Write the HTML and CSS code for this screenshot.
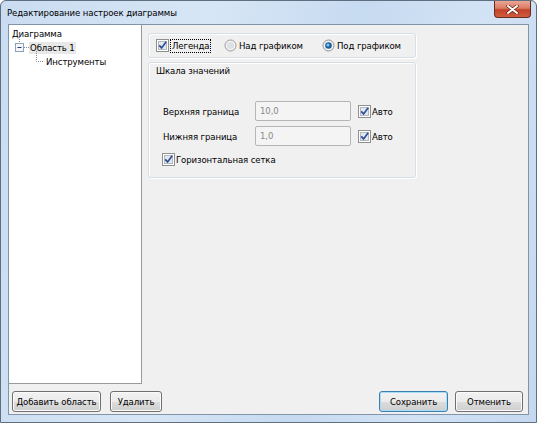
FILE: index.html
```html
<!DOCTYPE html>
<html>
<head>
<meta charset="utf-8">
<link rel="stylesheet" href="styles.css">
</head>
<body>
<div class="window">
  <div class="titlebar">
    <span class="title">Редактирование настроек диаграммы</span>
    <div class="close"><svg width="13" height="9" viewBox="0 0 13 9"><path d="M2 1 L11 8 M11 1 L2 8" stroke="#6a2416" stroke-width="3.4" stroke-linecap="round"/><path d="M2 1 L11 8 M11 1 L2 8" stroke="#ffffff" stroke-width="2" stroke-linecap="round"/></svg></div>
  </div>
  <div class="client">
    <div class="main">
      <div class="tree">
        <svg class="tree-lines" width="60" height="60" viewBox="0 0 60 60">
          <path d="M10.5 10 V18 M15 22.5 H20 M27.5 26 V36.5 H35" stroke="#8a8a8a" stroke-dasharray="1 1" fill="none"/>
          <rect x="6.5" y="18.5" width="8" height="8" fill="#f4f6f8" stroke="#8ea3bb"/>
          <path d="M8.5 22.5 H12.5" stroke="#1e3a8a"/>
        </svg>
        <div class="node root">Диаграмма</div>
        <div class="node lvl1"><span class="sel">Область 1</span></div>
        <div class="node lvl2">Инструменты</div>
      </div>
      <div class="panel">
        <div class="group legend-group">
          <label class="check legend">
            <svg class="cb" viewBox="0 0 13 13"><rect x="0.5" y="0.5" width="12" height="12" fill="#ffffff" stroke="#8e8f8f"/><rect x="2.5" y="2.5" width="8" height="8" fill="#e4e7eb" stroke="#b4b9bf"/><path d="M3.2 6.3 L5.6 8.9 L10.2 2.8" stroke="#2e4f9c" stroke-width="1.7" fill="none"/></svg>
            <span class="focus">Легенда</span>
          </label>
          <label class="radio r1">
            <svg class="rb" viewBox="0 0 13 13"><circle cx="6.5" cy="6.5" r="5.5" fill="#f3f3f3" stroke="#999"/><circle cx="6.5" cy="6.5" r="3.6" fill="#dcdfe3"/></svg>
            <span>Над графиком</span>
          </label>
          <label class="radio r2">
            <svg class="rb" viewBox="0 0 13 13"><circle cx="6.5" cy="6.5" r="5.5" fill="#f3f3f3" stroke="#8e8f8f"/><circle cx="6.5" cy="6.5" r="3.3" fill="#1c5c9c"/><circle cx="6" cy="6" r="1.6" fill="#7cc6f2"/></svg>
            <span>Под графиком</span>
          </label>
        </div>
        <div class="group scale-group">
          <div class="group-title">Шкала значений</div>
          <div class="field">
            <span class="field-label">Верхняя граница</span>
            <span class="input">10,0</span>
            <label class="check auto">
              <svg class="cb" viewBox="0 0 13 13"><rect x="0.5" y="0.5" width="12" height="12" fill="#ffffff" stroke="#8e8f8f"/><rect x="2.5" y="2.5" width="8" height="8" fill="#e4e7eb" stroke="#b4b9bf"/><path d="M3.2 6.3 L5.6 8.9 L10.2 2.8" stroke="#2e4f9c" stroke-width="1.7" fill="none"/></svg>
              <span>Авто</span>
            </label>
          </div>
          <div class="field">
            <span class="field-label">Нижняя граница</span>
            <span class="input">1,0</span>
            <label class="check auto">
              <svg class="cb" viewBox="0 0 13 13"><rect x="0.5" y="0.5" width="12" height="12" fill="#ffffff" stroke="#8e8f8f"/><rect x="2.5" y="2.5" width="8" height="8" fill="#e4e7eb" stroke="#b4b9bf"/><path d="M3.2 6.3 L5.6 8.9 L10.2 2.8" stroke="#2e4f9c" stroke-width="1.7" fill="none"/></svg>
              <span>Авто</span>
            </label>
          </div>
          <label class="check grid">
            <svg class="cb" viewBox="0 0 13 13"><rect x="0.5" y="0.5" width="12" height="12" fill="#ffffff" stroke="#8e8f8f"/><rect x="2.5" y="2.5" width="8" height="8" fill="#e4e7eb" stroke="#b4b9bf"/><path d="M3.2 6.3 L5.6 8.9 L10.2 2.8" stroke="#2e4f9c" stroke-width="1.7" fill="none"/></svg>
            <span>Горизонтальная сетка</span>
          </label>
        </div>
      </div>
    </div>
    <div class="bottom">
      <button class="btn add">Добавить область</button>
      <button class="btn del">Удалить</button>
      <span class="spacer"></span>
      <button class="btn save">Сохранить</button>
      <button class="btn cancel">Отменить</button>
    </div>
  </div>
</div>
</body>
</html>
```
FILE: styles.css
```css
* { box-sizing: border-box; }
html, body { margin: 0; padding: 0; background: #ffffff; }
body {
  font-family: "DejaVu Sans Condensed", "DejaVu Sans", sans-serif;
  font-size: 9.5px;
  letter-spacing: -0.1px;
  color: #000;
}
.window {
  width: 537px;
  height: 423px;
  border: 1px solid #5f6f80;
  border-radius: 6px 6px 0 0;
  background: linear-gradient(100deg, #c9dcf1 0%, #d7e6f6 35%, #c6daf0 60%, #d3e3f5 80%, #c4d8ef 100%);
  display: flex;
  flex-direction: column;
  overflow: hidden;
}
.titlebar {
  height: 23px;
  display: flex;
  align-items: flex-start;
  padding-left: 6px;
}
.title {
  margin-top: 6px;
  color: #000;
}
.close {
  margin-left: auto;
  margin-right: 5px;
  width: 37px;
  height: 17px;
  border: 1px solid #6b2a1e;
  border-top: none;
  border-radius: 0 0 4px 4px;
  background: linear-gradient(#e9a795 0%, #dc7c63 45%, #c3412a 55%, #cf5d3e 100%);
  display: flex;
  align-items: center;
  justify-content: center;
}
.client {
  flex: 1;
  margin: 0 7px 7px 7px;
  border: 1px solid #8294a8;
  background: #f0f0f0;
  display: flex;
  flex-direction: column;
}
.main {
  flex: 1;
  display: flex;
}
.tree {
  position: relative;
  width: 133px;
  background: #fff;
  border-right: 1px solid #9a9a9a;
  border-bottom: 1px solid #9a9a9a;
  padding-top: 2px;
}
.tree-lines {
  position: absolute;
  left: 0;
  top: 0;
  pointer-events: none;
}
.node {
  height: 14px;
  line-height: 14px;
  white-space: nowrap;
}
.root { padding-left: 3px; }
.lvl1 { padding-left: 20px; }
.lvl2 { padding-left: 37px; }
.sel {
  display: inline-block;
  background: #e8e8e8;
  padding: 0 1px;
  line-height: 12px;
  height: 12px;
}
.panel {
  flex: 1;
  padding: 8px 0 0 6px;
  display: flex;
  flex-direction: column;
  gap: 4px;
}
.group {
  width: 268px;
  border: 1px solid #d5dfe5;
  border-radius: 3px;
  box-shadow: inset 1px 1px 0 #ffffff, 1px 1px 0 #ffffff;
}
.legend-group {
  height: 25px;
  display: flex;
  align-items: center;
  padding-left: 7px;
}
.check, .radio {
  display: flex;
  align-items: center;
  white-space: nowrap;
}
.cb, .rb { width: 13px; height: 13px; flex: none; }
.check .cb { margin-right: 1px; }
.radio .rb { margin-right: 2px; }
.legend { width: 68px; }
.r1 { width: 98px; }
.focus {
  border: 1px dotted #000;
  padding: 0 1px;
  line-height: 12px;
}
.scale-group {
  height: 116px;
  padding: 1px 0 0 7px;
}
.group-title {
  height: 14px;
  line-height: 14px;
}
.field {
  display: flex;
  align-items: center;
  height: 20px;
  margin-top: 23px;
  padding-left: 7px;
}
.field + .field { margin-top: 5px; }
.field-label { width: 92px; }
.input {
  width: 96px;
  height: 20px;
  border: 1px solid #b5b5b5;
  border-radius: 2px;
  background: #f4f4f4;
  color: #8a8a8a;
  padding-left: 4px;
  line-height: 18px;
}
.auto { margin-left: 7px; }
.grid {
  margin-top: 6px;
  padding-left: 6px;
  height: 14px;
}
.bottom {
  height: 30px;
  display: flex;
  align-items: flex-start;
  padding: 7px 5px 0 3px;
}
.spacer { flex: 1; }
.btn {
  font-family: inherit;
  font-size: 9.5px;
  letter-spacing: -0.1px;
  color: #000;
  height: 21px;
  padding: 0;
  white-space: nowrap;
  border: 1px solid #707070;
  border-radius: 3px;
  background: linear-gradient(#f2f2f2 0%, #ebebeb 50%, #dddddd 51%, #cfcfcf 100%);
  box-shadow: inset 0 0 0 1px #fbfbfb;
}
.add { width: 89px; }
.del { width: 52px; margin-left: 9px; }
.save {
  width: 69px;
  border-color: #3c7fb1;
  box-shadow: inset 0 0 0 1px #a8dcf5;
}
.cancel { width: 68px; margin-left: 7px; }
```
